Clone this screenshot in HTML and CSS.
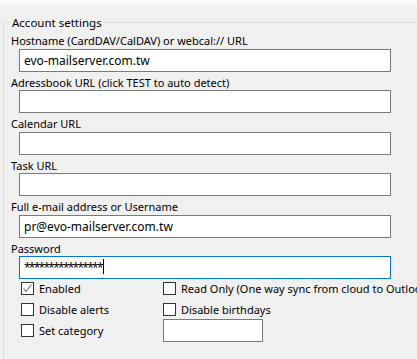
FILE: index.html
```html
<!DOCTYPE html>
<html lang="en">

<head>
  <meta charset="UTF-8">
  <title>Account settings</title>
  <link rel="stylesheet" href="styles.css">
</head>

<body>

  <div class="top-strip"></div>

  <!-- Account settings group -->
  <fieldset class="group">
    <legend>Account settings</legend>

    <label class="field-label" for="host">Hostname (CardDAV/CalDAV) or webcal:// URL</label>
    <input class="field" type="text" id="host" value="evo-mailserver.com.tw">

    <label class="field-label" for="abook">Adressbook URL (click TEST to auto detect)</label>
    <input class="field" type="text" id="abook" value="">

    <label class="field-label" for="cal">Calendar URL</label>
    <input class="field" type="text" id="cal" value="">

    <label class="field-label" for="task">Task URL</label>
    <input class="field" type="text" id="task" value="">

    <label class="field-label" for="user">Full e-mail address or Username</label>
    <input class="field" type="text" id="user" value="pr@evo-mailserver.com.tw">

    <label class="field-label" for="pwd">Password</label>
    <div class="pwd-wrap">
      <input class="field focused" type="text" id="pwd" value="****************">
      <span class="caret"></span>
    </div>

    <div class="options">
      <label class="opt"><span class="box checked"><svg width="11" height="11" viewBox="0 0 11 11"><path d="M1.5 5.5 L4 8.5 L9.5 1.5" fill="none" stroke="#6d6d6d" stroke-width="1.1"/></svg></span>Enabled</label>
      <label class="opt"><span class="box"></span>Read Only (One way sync from cloud to Outlook)</label>
      <label class="opt"><span class="box"></span>Disable alerts</label>
      <label class="opt"><span class="box"></span>Disable birthdays</label>
      <label class="opt"><span class="box"></span>Set category</label>
      <input class="small-field" type="text" value="">
    </div>
  </fieldset>

</body>

</html>
```

FILE: styles.css
```css
html,
body {
  margin: 0;
  height: 100%;
  overflow: hidden;
}

body {
  background: #f0f0f0;
  font-family: "Noto Sans", sans-serif;
  font-size: 11px;
  color: #000;
}

.top-strip {
  height: 5px;
  background: #f9f9f9;
}

.group {
  margin: 10px 0 0 3px;
  padding: 0 0 0 6px;
  width: 600px;
  height: 400px;
  border: 1px solid #dcdcdc;
  box-sizing: border-box;
}

.group legend {
  padding: 0 2px;
  font-size: 11.5px;
}

.field-label {
  display: block;
  padding-top: 4px;
  line-height: 14.5px;
  margin-left: 1px;
  white-space: nowrap;
}

.field {
  display: block;
  box-sizing: border-box;
  width: 372px;
  height: 23px;
  margin: 0 0 0 9px;
  padding: 0 4px;
  border: 1px solid #7a7a7a;
  border-radius: 0;
  background: #fff;
  font-family: "Noto Sans", sans-serif;
  font-size: 12px;
  color: #000;
  outline: none;
}

.field.focused {
  border-color: #0078d7;
  letter-spacing: -1.75px;
}

.pwd-wrap {
  position: relative;
}

.caret {
  position: absolute;
  left: 93px;
  top: 3px;
  width: 1px;
  height: 15px;
  background: #000;
}

.options {
  display: grid;
  grid-template-columns: 142px auto;
  grid-template-rows: repeat(3, 21px);
  align-items: center;
  margin: -1px 0 0 11px;
}

.opt {
  display: flex;
  align-items: center;
  gap: 5px;
  white-space: nowrap;
}

.box {
  display: inline-flex;
  align-items: center;
  justify-content: center;
  width: 13px;
  height: 13px;
  box-sizing: border-box;
  border: 1px solid #333;
  background: #fff;
}

.small-field {
  box-sizing: border-box;
  width: 100px;
  height: 23px;
  margin: 0;
  border: 1px solid #7a7a7a;
  background: #fff;
  outline: none;
}
```
